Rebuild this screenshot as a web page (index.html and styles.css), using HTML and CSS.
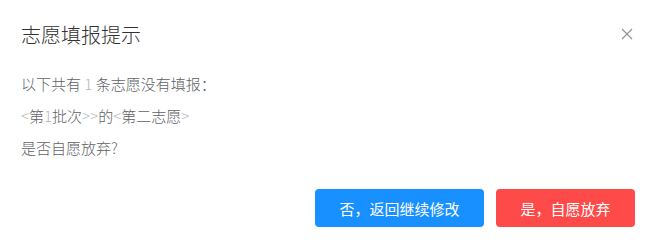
FILE: index.html
```html
<!DOCTYPE html>
<html lang="zh-CN">
<head>
  <meta charset="UTF-8" />
  <title>志愿填报提示</title>
  <link rel="stylesheet" href="styles.css">
</head>
<body>
  <div class="dialog">
    <div class="dialog-header">
      <span class="dialog-title">志愿填报提示</span>
      <button class="dialog-close" type="button" aria-label="关闭">
        <svg width="12" height="12" viewBox="0 0 12 12">
          <path d="M1 1L11 11M11 1L1 11" stroke="#909399" stroke-width="1.2" fill="none" />
        </svg>
      </button>
    </div>
    <div class="dialog-body">
      <p>以下共有 <span class="thin">1</span> 条志愿没有填报：</p>
      <p><span class="thin">&lt;</span>第<span class="thin">1</span>批次<span class="thin">&gt;&gt;</span>的<span class="thin">&lt;</span>第二志愿<span class="thin">&gt;</span></p>
      <p>是否自愿放弃?</p>
    </div>
    <div class="dialog-footer">
      <button class="btn btn-primary" type="button">否，返回继续修改</button>
      <button class="btn btn-danger" type="button">是，自愿放弃</button>
    </div>
  </div>
</body>
</html>
```

FILE: styles.css
```css
body {
  margin: 0;
  background: #fff;
  font-family: "Noto Sans CJK SC", "Noto Sans", sans-serif;
}
.dialog {
  width: 654px;
  height: 244px;
  box-sizing: border-box;
  padding: 0 19px 0 21px;
}
.dialog-header {
  display: flex;
  justify-content: space-between;
  align-items: center;
  height: 68px;
}
.dialog-title {
  font-size: 20px;
  font-weight: 300;
  color: #303133;
}
.dialog-close {
  border: none;
  background: none;
  padding: 0;
  margin-right: 2px;
  cursor: pointer;
  display: flex;
}
.dialog-body {
  color: #606266;
  font-size: 15px;
  font-weight: 300;
}
.dialog-body p {
  margin: 0;
  line-height: 32px;
}
.thin {
  color: #b5b7bb;
}
.dialog-footer {
  display: flex;
  justify-content: flex-end;
  gap: 12px;
  margin-top: 25px;
}
.btn {
  height: 38px;
  border: none;
  border-radius: 4px;
  color: #fff;
  font-family: inherit;
  font-size: 15px;
  cursor: pointer;
}
.btn-primary {
  width: 169px;
  background-color: #1890ff;
}
.btn-danger {
  width: 139px;
  background-color: #ff4a4a;
}
```
